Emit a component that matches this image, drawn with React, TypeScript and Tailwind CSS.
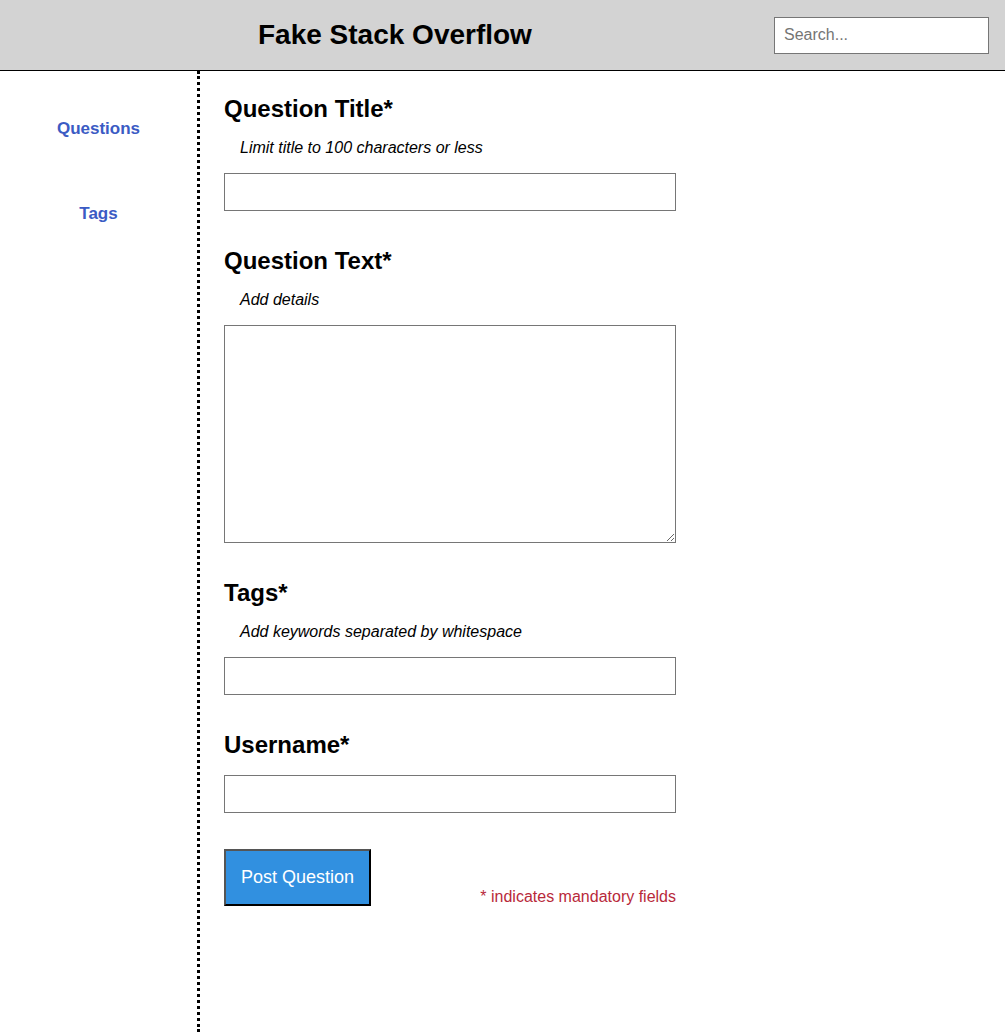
export default function App() {
  const font = { fontFamily: '"Liberation Sans", Arial, sans-serif' };

  return (
    <div className="min-h-[1032px] bg-white text-black flex flex-col" style={font}>
      <header className="h-[71px] shrink-0 bg-[#d3d3d3] border-b border-black flex items-center justify-between pr-4">
        <h1 className="pl-[258px] text-[28px] leading-[32px] font-bold">Fake Stack Overflow</h1>
        <input
          type="text"
          placeholder="Search..."
          className="w-[215px] h-[37px] bg-white border border-[#767676] px-[9px] text-[16px] placeholder:text-[#757575] outline-none"
        />
      </header>

      <div className="flex flex-1">
        <nav className="w-[200px] shrink-0 border-r-[3px] border-dotted border-black flex flex-col items-center pt-[48px] gap-[65px]">
          <a href="#" className="text-[17px] leading-[20px] font-bold text-[#3b5bc4]">Questions</a>
          <a href="#" className="text-[17px] leading-[20px] font-bold text-[#3b5bc4]">Tags</a>
        </nav>

        <main className="flex-1 pl-6 pt-[24px]">
          <div className="w-[452px] flex flex-col">
            <h2 className="text-[24px] leading-[28px] font-bold">Question Title*</h2>
            <p className="mt-[15px] pl-4 text-[16px] leading-[20px] italic">Limit title to 100 characters or less</p>
            <input type="text" className="block mt-[15px] h-[38px] border border-[#767676] outline-none px-2" />

            <h2 className="mt-9 text-[24px] leading-[28px] font-bold">Question Text*</h2>
            <p className="mt-[15px] pl-4 text-[16px] leading-[20px] italic">Add details</p>
            <textarea className="block mt-[15px] h-[218px] border border-[#767676] outline-none p-2 resize" />

            <h2 className="mt-9 text-[24px] leading-[28px] font-bold">Tags*</h2>
            <p className="mt-[15px] pl-4 text-[16px] leading-[20px] italic">Add keywords separated by whitespace</p>
            <input type="text" className="block mt-[15px] h-[38px] border border-[#767676] outline-none px-2" />

            <h2 className="mt-9 text-[24px] leading-[28px] font-bold">Username*</h2>
            <input type="text" className="block mt-4 h-[38px] border border-[#767676] outline-none px-2" />

            <div className="mt-9 flex items-end justify-between">
              <button className="h-[57px] px-[15px] bg-[#3190e0] text-white text-[18px] border-2 border-t-[#555] border-l-[#555] border-b-black border-r-black">
                Post Question
              </button>
              <span className="text-[16px] leading-[18px] text-[#b8293a]">* indicates mandatory fields</span>
            </div>
          </div>
        </main>
      </div>
    </div>
  );
}
